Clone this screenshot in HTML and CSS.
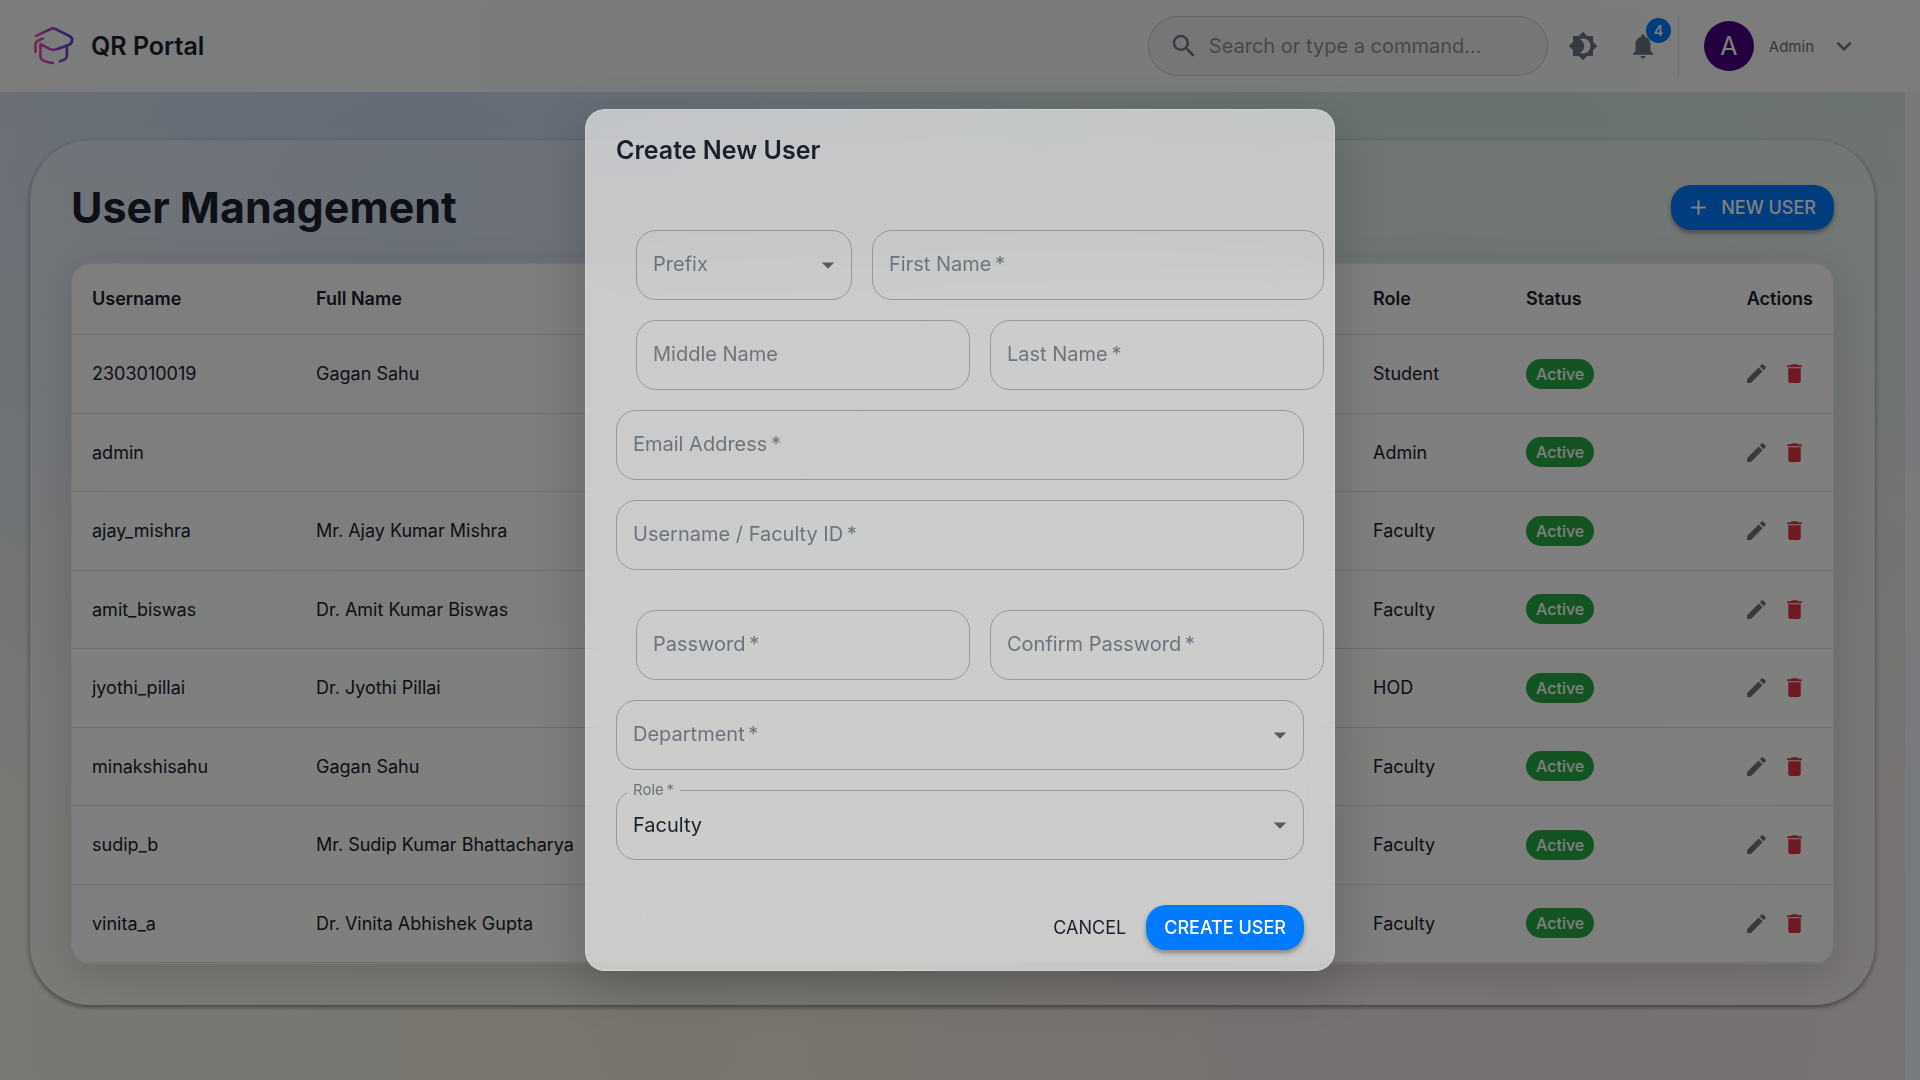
FILE: index.html
```html
<!DOCTYPE html>
<html lang="en">
<head>
<meta charset="utf-8">
<meta name="viewport" content="width=device-width, initial-scale=1">
<title>QR Portal - User Management</title>
<link rel="stylesheet" href="styles.css">
</head>
<body>
<svg class="sprite" aria-hidden="true">
  <symbol id="pencil" viewBox="0 0 24 24"><path d="M3 17.25V21h3.75L17.81 9.94l-3.75-3.75L3 17.25zM20.71 7.04c.39-.39.39-1.02 0-1.41l-2.34-2.34a.996.996 0 0 0-1.41 0l-1.83 1.83 3.75 3.75 1.83-1.83z"/></symbol>
  <symbol id="trash" viewBox="0 0 24 24"><path d="M6 19c0 1.100.9 2 2 2h8c1.100 0 2-.9 2-2V7H6v12zM19 4h-3.500l-1-1h-5l-1 1H5v2h14V4z"/></symbol>
  <symbol id="caret" viewBox="0 0 24 24"><path d="M7 10l5 5 5-5z"/></symbol>
</svg>

<header class="topbar">
  <a class="brand" href="#">
    <svg class="logo" viewBox="0 0 120 115" aria-hidden="true">
      <defs>
        <linearGradient id="brandStroke" x1="0" y1="60" x2="120" y2="50" gradientUnits="userSpaceOnUse">
          <stop offset="0" stop-color="#f0529c"/>
          <stop offset=".5" stop-color="#a24ac8"/>
          <stop offset="1" stop-color="#4a36e0"/>
        </linearGradient>
      </defs>
      <g fill="none" stroke="url(#brandStroke)" stroke-width="8" stroke-linecap="round" stroke-linejoin="round">
        <path d="M6 27L50 6Q57 2 64 6L106 27Q115 31 115 38Q115 49 106 54L68 67Q58 71 48 67L19 52V86Q19 98 29 102Q42 109 57 109"/>
        <path d="M99 58V86Q99 94 93 98L78 104"/>
        <path d="M4 76V53Q4 46 10 42L26 35"/>
      </g>
    </svg>
    <span>QR Portal</span>
  </a>
  <div class="tools">
    <label class="search">
      <svg class="icon" viewBox="0 0 24 24" aria-hidden="true"><path d="M15.500 14h-.79l-.28-.27A6.471 6.471 0 0 0 16 9.500 6.500 6.500 0 1 0 9.500 16c1.610 0 3.090-.59 4.230-1.570l.27.28v.79l5 4.990L20.490 19l-4.990-5zm-6 0C7.010 14 5 11.990 5 9.500S7.010 5 9.500 5 14 7.010 14 9.500 11.990 14 9.500 14z"/></svg>
      <input type="search" placeholder="Search or type a command..." aria-label="Search or type a command">
    </label>
    <button class="tool" type="button" aria-label="Toggle theme">
      <svg class="icon" viewBox="0 0 24 24" aria-hidden="true"><path d="M20 8.690V4h-4.690L12 .69 8.690 4H4v4.690L.69 12 4 15.310V20h4.690L12 23.310 15.310 20H20v-4.690L23.310 12 20 8.690zM12 18c-.89 0-1.740-.2-2.500-.55C11.560 16.500 13 14.420 13 12s-1.440-4.500-3.500-5.450C10.260 6.200 11.110 6 12 6c3.310 0 6 2.690 6 6s-2.690 6-6 6z"/></svg>
    </button>
    <button class="tool" type="button" aria-label="Notifications">
      <svg class="icon" viewBox="0 0 24 24" aria-hidden="true"><path d="M12 22c1.100 0 2-.9 2-2h-4c0 1.100.89 2 2 2zm6-6v-5c0-3.070-1.640-5.640-4.500-6.320V4c0-.83-.67-1.500-1.500-1.500s-1.500.67-1.500 1.500v.68C7.630 5.360 6 7.920 6 11v5l-2 2v1h16v-1l-2-2z"/></svg>
      <span class="badge">4</span>
    </button>
    <button class="account" type="button">
      <span class="avatar">A</span>
      <span>Admin</span>
      <svg class="icon" viewBox="0 0 24 24" aria-hidden="true"><path d="M16.590 8.590L12 13.170 7.410 8.590 6 10l6 6 6-6z"/></svg>
    </button>
  </div>
</header>

<main class="page">
  <section class="card">
    <div class="card-head">
      <h1>User Management</h1>
      <button class="btn btn-primary" type="button">
        <svg class="plus" viewBox="0 0 24 24" aria-hidden="true"><path d="M19 13h-6v6h-2v-6H5v-2h6V5h2v6h6v2z"/></svg>
        NEW USER
      </button>
    </div>
    <div class="table-wrap">
      <table>
        <thead>
          <tr><th class="c-user">Username</th><th>Full Name</th><th class="c-role">Role</th><th class="c-status">Status</th><th class="c-act">Actions</th></tr>
        </thead>
        <tbody>
          <tr><td>2303010019</td><td>Gagan Sahu</td><td>Student</td><td><span class="chip">Active</span></td><td class="c-act"><button class="act" aria-label="Edit"><svg><use href="#pencil"/></svg></button><button class="act del" aria-label="Delete"><svg><use href="#trash"/></svg></button></td></tr>
          <tr><td>admin</td><td></td><td>Admin</td><td><span class="chip">Active</span></td><td class="c-act"><button class="act" aria-label="Edit"><svg><use href="#pencil"/></svg></button><button class="act del" aria-label="Delete"><svg><use href="#trash"/></svg></button></td></tr>
          <tr><td>ajay_mishra</td><td>Mr. Ajay Kumar Mishra</td><td>Faculty</td><td><span class="chip">Active</span></td><td class="c-act"><button class="act" aria-label="Edit"><svg><use href="#pencil"/></svg></button><button class="act del" aria-label="Delete"><svg><use href="#trash"/></svg></button></td></tr>
          <tr><td>amit_biswas</td><td>Dr. Amit Kumar Biswas</td><td>Faculty</td><td><span class="chip">Active</span></td><td class="c-act"><button class="act" aria-label="Edit"><svg><use href="#pencil"/></svg></button><button class="act del" aria-label="Delete"><svg><use href="#trash"/></svg></button></td></tr>
          <tr><td>jyothi_pillai</td><td>Dr. Jyothi Pillai</td><td>HOD</td><td><span class="chip">Active</span></td><td class="c-act"><button class="act" aria-label="Edit"><svg><use href="#pencil"/></svg></button><button class="act del" aria-label="Delete"><svg><use href="#trash"/></svg></button></td></tr>
          <tr><td>minakshisahu</td><td>Gagan Sahu</td><td>Faculty</td><td><span class="chip">Active</span></td><td class="c-act"><button class="act" aria-label="Edit"><svg><use href="#pencil"/></svg></button><button class="act del" aria-label="Delete"><svg><use href="#trash"/></svg></button></td></tr>
          <tr><td>sudip_b</td><td>Mr. Sudip Kumar Bhattacharya</td><td>Faculty</td><td><span class="chip">Active</span></td><td class="c-act"><button class="act" aria-label="Edit"><svg><use href="#pencil"/></svg></button><button class="act del" aria-label="Delete"><svg><use href="#trash"/></svg></button></td></tr>
          <tr><td>vinita_a</td><td>Dr. Vinita Abhishek Gupta</td><td>Faculty</td><td><span class="chip">Active</span></td><td class="c-act"><button class="act" aria-label="Edit"><svg><use href="#pencil"/></svg></button><button class="act del" aria-label="Delete"><svg><use href="#trash"/></svg></button></td></tr>
        </tbody>
      </table>
    </div>
  </section>
</main>

<div class="backdrop">
  <form class="dialog" role="dialog" aria-modal="true" aria-labelledby="dialog-title">
    <h2 id="dialog-title">Create New User</h2>
    <div class="fields">
      <div class="pair pair-prefix">
        <div class="field">
          <select id="prefix"><option value=""></option></select>
          <label for="prefix">Prefix</label>
          <svg class="caret" aria-hidden="true"><use href="#caret"/></svg>
        </div>
        <div class="field"><input id="first" type="text"><label for="first">First Name&#8201;*</label></div>
      </div>
      <div class="pair">
        <div class="field"><input id="middle" type="text"><label for="middle">Middle Name</label></div>
        <div class="field"><input id="last" type="text"><label for="last">Last Name&#8201;*</label></div>
      </div>
      <div class="field"><input id="email" type="email"><label for="email">Email Address&#8201;*</label></div>
      <div class="field"><input id="username" type="text"><label for="username">Username / Faculty ID&#8201;*</label></div>
      <div class="pair pair-password">
        <div class="field"><input id="password" type="password"><label for="password">Password&#8201;*</label></div>
        <div class="field"><input id="confirm" type="password"><label for="confirm">Confirm Password&#8201;*</label></div>
      </div>
      <div class="field">
        <select id="department"><option value=""></option></select>
        <label for="department">Department&#8201;*</label>
        <svg class="caret" aria-hidden="true"><use href="#caret"/></svg>
      </div>
      <fieldset class="notched">
        <legend><label for="role">Role&#8201;*</label></legend>
        <div class="field">
          <select id="role"><option>Faculty</option></select>
          <svg class="caret" aria-hidden="true"><use href="#caret"/></svg>
        </div>
      </fieldset>
    </div>
    <div class="actions">
      <button class="btn btn-text" type="button">CANCEL</button>
      <button class="btn btn-primary" type="submit">CREATE USER</button>
    </div>
  </form>
</div>
</body>
</html>
```
FILE: styles.css
```css
:root {
  --ink: #1a202c;
  --muted: #6c757d;
  --blue: #007bff;
  --line: rgba(0, 0, 0, .12);
}

* { box-sizing: border-box; }

body {
  margin: 0;
  min-height: 100vh;
  display: flex;
  flex-direction: column;
  font-family: Inter, "Liberation Sans", sans-serif;
  font-size: 18px;
  color: var(--ink);
  background: linear-gradient(#f0f0f6, #f0f8fc);
}

button, input, select { font: inherit; color: inherit; }
button { cursor: pointer; border: 0; background: none; padding: 0; }
.sprite { position: absolute; width: 0; height: 0; }
.icon { width: 30px; height: 30px; fill: currentColor; flex: none; }

/* Top bar */
.topbar {
  display: flex;
  align-items: center;
  justify-content: space-between;
  padding: 15px 60px 15px 33px;
  border: 1px solid rgba(255, 255, 255, .2);
  background: linear-gradient(90deg, #f8f8f8, #f4f8f8 40%, #f6f8f6);
}
.brand {
  display: flex;
  align-items: center;
  gap: 17px;
  color: var(--ink);
  font-size: 25px;
  font-weight: 600;
  text-decoration: none;
}
.logo { width: 40px; height: 38px; }
.tools { display: flex; align-items: center; color: #6b7280; }
.search {
  display: flex;
  align-items: center;
  gap: 10px;
  width: 400px;
  height: 60px;
  margin-right: 10px;
  padding: 0 20px;
  border: 1px solid rgba(0, 0, 0, .15);
  border-radius: 30px;
  background: rgba(0, 0, 0, .04);
}
.search input {
  flex: 1;
  min-width: 0;
  padding: 0;
  border: 0;
  outline: 0;
  background: none;
  font-size: 20px;
}
.search input::placeholder { color: #8a9096; opacity: 1; }
.tool {
  position: relative;
  display: grid;
  place-items: center;
  width: 50px;
  height: 50px;
}
.tool + .tool { margin: 0 10px; }
.badge {
  position: absolute;
  top: -3px;
  right: -3px;
  width: 25px;
  height: 25px;
  border-radius: 50%;
  background: var(--blue);
  color: #fff;
  font-size: 15px;
  font-weight: 500;
  line-height: 25px;
}
.account {
  display: flex;
  align-items: center;
  gap: 15px;
  height: 60px;
  padding-left: 25px;
  border-left: 1px solid rgba(0, 0, 0, .12);
  font-size: 15px;
}
.avatar {
  width: 50px;
  height: 50px;
  border-radius: 50%;
  background: #4b0082;
  color: #fff;
  font-size: 25px;
  line-height: 50px;
}

/* Page */
.page {
  flex: 1;
  margin-right: 15px;
  padding: 48px 30px 74px;
  background:
    radial-gradient(circle at 22% 15%, rgba(170, 195, 240, .5), transparent 40%),
    radial-gradient(circle at 75% 15%, rgba(190, 225, 200, .5), transparent 45%),
    radial-gradient(circle at 80% 90%, rgba(235, 205, 215, .5), transparent 42%),
    radial-gradient(circle at 35% 95%, rgba(240, 230, 200, .5), transparent 45%),
    linear-gradient(#e0e8ee, #f0f0ea 60%);
}
.card {
  padding: 40px;
  border: 1px solid rgba(255, 255, 255, .1);
  border-radius: 60px;
  background: rgba(255, 255, 255, .3);
  background-clip: padding-box;
  box-shadow: 0 2px 5px rgba(0, 0, 0, .45);
}
.card-head {
  display: flex;
  align-items: center;
  justify-content: space-between;
  margin-bottom: 30px;
}
h1 { margin: 0; font-size: 43px; font-weight: 700; line-height: 52px; }
.btn {
  display: inline-flex;
  align-items: center;
  gap: 10px;
  height: 45px;
  padding: 0 18px;
  border-radius: 20px;
  font-size: 18px;
  font-weight: 500;
}
.btn-primary {
  background: var(--blue);
  color: #fff;
  box-shadow: 0 3px 5px rgba(0, 0, 0, .35);
}
.btn-text { padding: 0; font-weight: 400; }
.plus { width: 25px; height: 25px; margin-left: -3px; fill: currentColor; }

.table-wrap {
  overflow: hidden;
  border: 1px solid rgba(255, 255, 255, .1);
  border-radius: 20px;
  background: rgba(255, 255, 255, .9);
  background-clip: padding-box;
  box-shadow: 0 10px 40px rgba(0, 0, 0, .14);
}
table { width: 100%; border-collapse: collapse; table-layout: fixed; }
th, td {
  padding: 0 20px;
  border-bottom: 1px solid var(--line);
  text-align: left;
}
th { height: 70px; font-weight: 600; }
td { height: 79px; }
tr:nth-child(even) td { height: 78px; }
.c-user { width: 224px; }
.c-role { width: 153px; }
.c-status { width: 163px; }
.c-act { width: 164px; text-align: right; }
.chip {
  display: inline-block;
  padding: 0 10px;
  border-radius: 15px;
  background: #28a745;
  color: #fff;
  font-size: 16px;
  font-weight: 500;
  line-height: 30px;
}
.act { width: 38px; height: 38px; color: #757575; vertical-align: middle; }
.act svg { display: block; width: 25px; height: 25px; margin: auto; fill: currentColor; }
.del { color: #dc3545; }

/* Dialog */
.backdrop {
  position: fixed;
  inset: 0;
  display: grid;
  place-items: center;
  background: rgba(0, 0, 0, .5);
}
.dialog {
  width: 750px;
  max-width: 100%;
  border: 1px solid rgba(255, 255, 255, .2);
  border-radius: 20px;
  background: rgba(255, 255, 255, .6);
  backdrop-filter: blur(25px);
  box-shadow: 0 14px 50px rgba(0, 0, 0, .2);
}
h2 { margin: 0; padding: 20px 30px; font-size: 25px; font-weight: 600; line-height: 40px; }
.fields { display: flex; flex-direction: column; gap: 20px; padding: 40px 30px 25px; }
.pair {
  display: grid;
  grid-template-columns: 1fr 1fr;
  gap: 20px;
  margin: 0 -20px 0 20px;
}
.pair-prefix { grid-template-columns: 216px 1fr; }
.pair-password { margin-top: 20px; }
.field { display: grid; align-items: center; font-size: 20px; }
.field > * { grid-area: 1 / 1; }
.field > label { padding: 0 17px 2px; color: var(--muted); pointer-events: none; }
.field input, .field select {
  width: 100%;
  height: 70px;
  padding: 0 17px;
  border: 1px solid rgba(0, 0, 0, .25);
  border-radius: 20px;
  outline: 0;
  background: none;
  appearance: none;
}
.caret {
  justify-self: end;
  width: 30px;
  height: 30px;
  margin-right: 9px;
  fill: #5a5a5a;
  pointer-events: none;
}
.notched {
  min-width: 0;
  height: 80px;
  margin: -10px 0 0;
  padding: 0;
  border: 1px solid rgba(0, 0, 0, .25);
  border-radius: 20px;
}
.notched legend {
  margin-left: 10px;
  padding: 0 6px;
  color: var(--muted);
  font-size: 15px;
  line-height: 20px;
}
.notched select { height: 50px; padding: 0 16px; border: 0; }
.notched .caret { margin-right: 8px; }
.actions { display: flex; justify-content: flex-end; gap: 20px; padding: 20px 30px; }
```
